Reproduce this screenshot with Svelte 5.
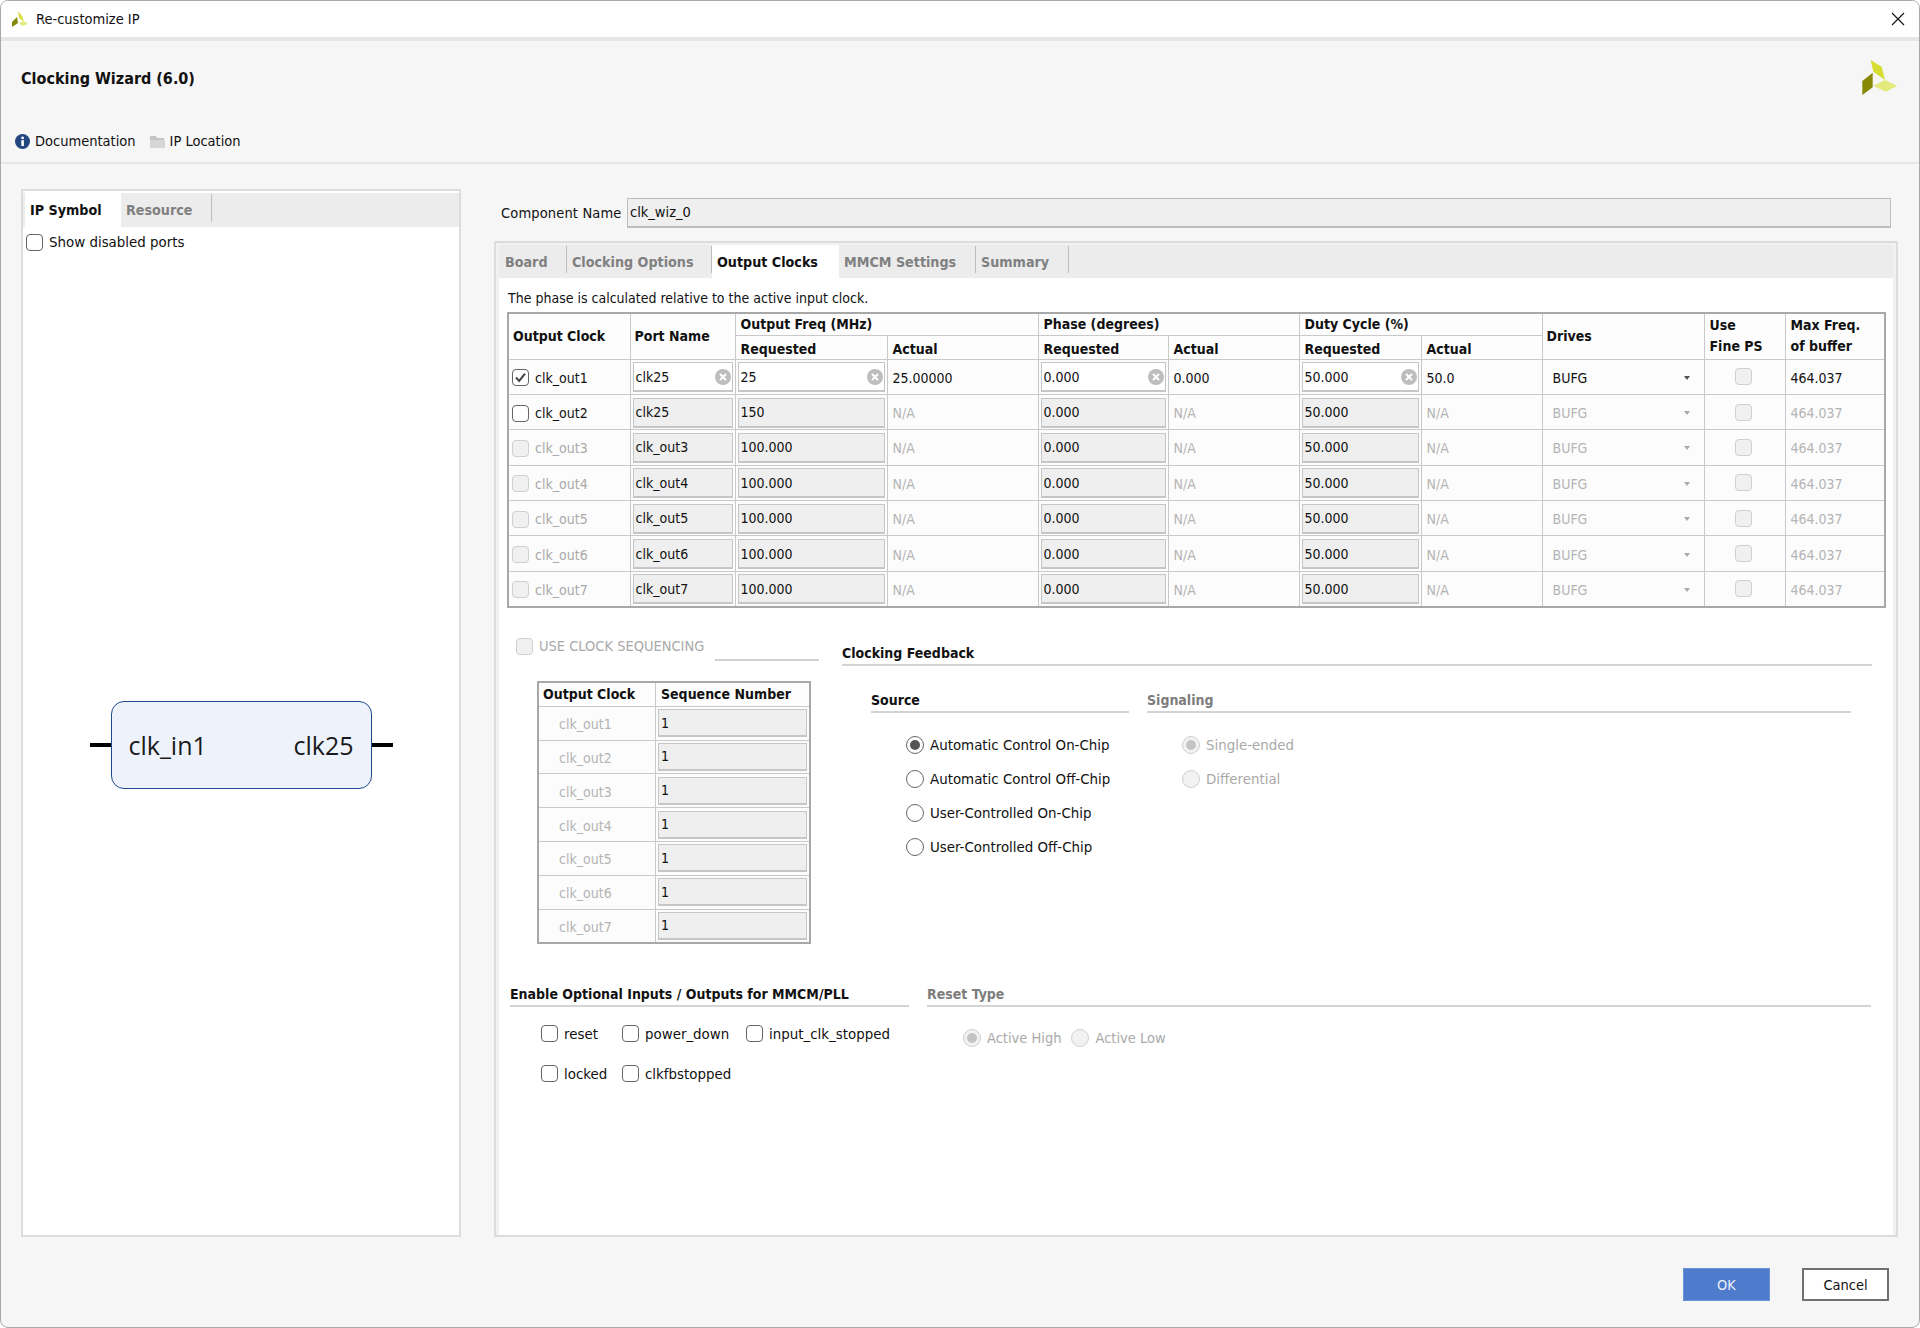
<script>
  const rows = [
    { name: "clk_out1", port: "clk25", freq: "25", actual: "25.00000", phase: "0.000", phaseAct: "0.000", duty: "50.000", dutyAct: "50.0", state: "on" },
    { name: "clk_out2", port: "clk25", freq: "150", actual: "N/A", phase: "0.000", phaseAct: "N/A", duty: "50.000", dutyAct: "N/A", state: "off" },
    { name: "clk_out3", port: "clk_out3", freq: "100.000", actual: "N/A", phase: "0.000", phaseAct: "N/A", duty: "50.000", dutyAct: "N/A", state: "dis" },
    { name: "clk_out4", port: "clk_out4", freq: "100.000", actual: "N/A", phase: "0.000", phaseAct: "N/A", duty: "50.000", dutyAct: "N/A", state: "dis" },
    { name: "clk_out5", port: "clk_out5", freq: "100.000", actual: "N/A", phase: "0.000", phaseAct: "N/A", duty: "50.000", dutyAct: "N/A", state: "dis" },
    { name: "clk_out6", port: "clk_out6", freq: "100.000", actual: "N/A", phase: "0.000", phaseAct: "N/A", duty: "50.000", dutyAct: "N/A", state: "dis" },
    { name: "clk_out7", port: "clk_out7", freq: "100.000", actual: "N/A", phase: "0.000", phaseAct: "N/A", duty: "50.000", dutyAct: "N/A", state: "dis" }
  ];
  const widths = [122, 105, 152, 151, 130, 131, 122, 121, 162, 81, 100];
  const sources = ["Automatic Control On-Chip", "Automatic Control Off-Chip", "User-Controlled On-Chip", "User-Controlled Off-Chip"];
</script>

{#snippet field(value, live)}
  <div class="field" class:live>
    <span>{value}</span>
    {#if live}
      <svg class="clear" width="16" height="16" viewBox="0 0 16 16">
        <circle cx="8" cy="8" r="8" fill="#bdbdbd" />
        <path d="M5 5l6 6M11 5l-6 6" stroke="#fff" stroke-width="2" />
      </svg>
    {/if}
  </div>
{/snippet}

{#snippet check(label, state = "off")}
  <div class="check" class:dim={state === "dis"}>
    <span class="box" class:dis={state === "dis"}>
      {#if state === "on"}
        <svg width="15" height="15" viewBox="0 0 15 15"><path d="M3 7.5l3.2 3.4L12 3.6" fill="none" stroke="#444" stroke-width="2" /></svg>
      {/if}
    </span>
    <span>{label}</span>
  </div>
{/snippet}

{#snippet radio(label, on, dis)}
  <div class="radio" class:dim={dis}>
    <span class="dot" class:on class:dis></span>
    <span>{label}</span>
  </div>
{/snippet}

<div class="window">
  <header class="titlebar">
    <svg class="app-icon" width="16" height="16" viewBox="0 0 16 16">
      <path d="M6 0l4 5 2 6-5-4z" fill="#d6dc38" />
      <path d="M7 12l5-2 4 3-6 2z" fill="#e6ea80" />
      <path d="M5 6l1 6-6 4v-5z" fill="#86880a" />
    </svg>
    <span class="title">Re-customize IP</span>
    <svg class="close" width="14" height="14" viewBox="0 0 14 14"><path d="M1 1l12 12M13 1L1 13" stroke="#111" stroke-width="1.1" /></svg>
  </header>

  <div class="heading">
    <h1>Clocking Wizard (6.0)</h1>
    <svg width="36" height="36" viewBox="0 0 36 36">
      <polygon points="8.7,0 19.7,6.7 23,20 11.3,11.7" fill="#d5dd33" />
      <polygon points="11.3,25.7 23,20 35.3,26 23.7,31.7" fill="#e4e97c" />
      <polygon points="10.7,12.7 10.7,27.3 0.3,35 0.3,21" fill="#868806" />
    </svg>
  </div>

  <nav class="links">
    <span class="link">
      <svg width="15" height="15" viewBox="0 0 15 15">
        <circle cx="7.5" cy="7.5" r="7.5" fill="#22467f" />
        <rect x="6.3" y="6.2" width="2.6" height="5.8" fill="#fff" />
        <circle cx="7.6" cy="3.9" r="1.4" fill="#fff" />
      </svg>
      Documentation
    </span>
    <span class="link">
      <svg width="15" height="13" viewBox="0 0 15 13">
        <path d="M0 1h6l1 2h7v2H0z" fill="#c4c4c4" />
        <path d="M0 5h15v8H0z" fill="#d6d6d6" />
      </svg>
      IP Location
    </span>
  </nav>

  <main class="body">
    <section class="panel symbol-panel">
      <div class="tabs">
        <span class="tab active">IP Symbol</span>
        <span class="tab sep">Resource</span>
      </div>
      <div class="show-ports">{@render check("Show disabled ports")}</div>
      <div class="symbol">
        <span class="pin"></span>
        <div class="block"><span>clk_in1</span><span>clk25</span></div>
        <span class="pin"></span>
      </div>
    </section>

    <section class="config">
      <div class="component">
        <label for="cname">Component Name</label>
        <input id="cname" value="clk_wiz_0" readonly />
      </div>

      <div class="panel main-panel">
        <div class="tabs">
          <span class="tab sep board">Board</span>
          <span class="tab sep options">Clocking Options</span>
          <span class="tab active outclk">Output Clocks</span>
          <span class="tab sep mmcm">MMCM Settings</span>
          <span class="tab sep summary">Summary</span>
        </div>

        <div class="page">
          <p class="note">The phase is calculated relative to the active input clock.</p>

          <table class="clocks">
            <colgroup>
              {#each widths as w}<col style="width: {w}px" />{/each}
            </colgroup>
            <thead>
              <tr class="h1">
                <th rowspan="2" class="mid">Output Clock</th>
                <th rowspan="2" class="mid">Port Name</th>
                <th colspan="2">Output Freq (MHz)</th>
                <th colspan="2">Phase (degrees)</th>
                <th colspan="2">Duty Cycle (%)</th>
                <th rowspan="2" class="mid">Drives</th>
                <th rowspan="2" class="two">Use<br />Fine PS</th>
                <th rowspan="2" class="two">Max Freq.<br />of buffer</th>
              </tr>
              <tr class="h2">
                <th>Requested</th><th>Actual</th>
                <th>Requested</th><th>Actual</th>
                <th>Requested</th><th>Actual</th>
              </tr>
            </thead>
            <tbody>
              {#each rows as r}
                {@const first = r.state === "on"}
                <tr>
                  <td class="clk">{@render check(r.name, r.state)}</td>
                  <td class="inp">{@render field(r.port, first)}</td>
                  <td class="inp">{@render field(r.freq, first)}</td>
                  <td class:na={!first}>{r.actual}</td>
                  <td class="inp">{@render field(r.phase, first)}</td>
                  <td class:na={!first}>{r.phaseAct}</td>
                  <td class="inp">{@render field(r.duty, first)}</td>
                  <td class:na={!first}>{r.dutyAct}</td>
                  <td class="drive" class:na={!first}><div><span>BUFG</span><i class="caret"></i></div></td>
                  <td class="fine"><span class="box dis"></span></td>
                  <td class:na={!first}>464.037</td>
                </tr>
              {/each}
            </tbody>
          </table>

          <div class="lower">
            <div class="seq">
              <div class="seq-head">
                {@render check("USE CLOCK SEQUENCING", "dis")}
                <span class="seq-line"></span>
              </div>
              <table class="seq-table">
                <thead><tr><th>Output Clock</th><th>Sequence Number</th></tr></thead>
                <tbody>
                  {#each rows as r}
                    <tr><td class="seq-name">{r.name}</td><td class="inp">{@render field("1", false)}</td></tr>
                  {/each}
                </tbody>
              </table>
            </div>

            <div class="feedback">
              <h3 class="rule">Clocking Feedback</h3>
              <div class="fb-cols">
                <div class="source">
                  <h3 class="rule">Source</h3>
                  <div class="radios">
                    {#each sources as s, i}
                      {@render radio(s, i === 0, false)}
                    {/each}
                  </div>
                </div>
                <div class="signaling">
                  <h3 class="rule off">Signaling</h3>
                  <div class="radios">
                    {@render radio("Single-ended", true, true)}
                    {@render radio("Differential", false, true)}
                  </div>
                </div>
              </div>
            </div>
          </div>

          <div class="optional">
            <div class="opt-io">
              <h3 class="rule">Enable Optional Inputs / Outputs for MMCM/PLL</h3>
              <div class="opt-grid">
                {@render check("reset")}
                {@render check("power_down")}
                {@render check("input_clk_stopped")}
                {@render check("locked")}
                {@render check("clkfbstopped")}
              </div>
            </div>
            <div class="reset-type">
              <h3 class="rule off">Reset Type</h3>
              <div class="reset-radios">
                {@render radio("Active High", true, true)}
                {@render radio("Active Low", false, true)}
              </div>
            </div>
          </div>
        </div>
      </div>
    </section>
  </main>

  <footer class="actions">
    <button class="ok">OK</button>
    <button class="cancel">Cancel</button>
  </footer>
</div>

<style>
  :global(body) {
    margin: 0;
    background: #fff;
  }

  .window {
    width: 1920px;
    height: 1328px;
    box-sizing: border-box;
    display: flex;
    flex-direction: column;
    border: 1px solid #a9a9a9;
    border-radius: 8px;
    overflow: hidden;
    background: #f6f6f6;
    font-family: "DejaVu Sans", "Noto Sans", sans-serif;
    font-stretch: condensed;
    font-size: 14.5px;
    color: #111;
  }

  .titlebar {
    height: 36px;
    flex: none;
    display: flex;
    align-items: center;
    padding: 0 14px 0 11px;
    background: #fff;
    border-bottom: 4px solid #e6e6e6;
  }

  .title {
    margin-left: 8px;
    flex: 1;
  }

  .heading {
    height: 74px;
    flex: none;
    display: flex;
    align-items: center;
    justify-content: space-between;
    padding: 0 21px 0 20px;
  }

  h1 {
    margin: 0;
    font-size: 16px;
    font-weight: bold;
  }

  .links {
    height: 49px;
    flex: none;
    box-sizing: border-box;
    display: flex;
    gap: 14px;
    padding: 16px 0 0 14px;
    border-bottom: 2px solid #e6e6e6;
  }

  .link {
    display: flex;
    align-items: center;
    gap: 5px;
    height: 20px;
  }

  .body {
    display: flex;
    padding: 25px 21px 0 20px;
    gap: 33px;
    height: 1074px;
    flex: none;
    box-sizing: border-box;
  }

  .panel {
    box-sizing: border-box;
    border: 2px solid #dcdcdc;
    padding: 2px 2px 0;
    background: #f1f1f1;
    display: flex;
    flex-direction: column;
  }

  .symbol-panel {
    width: 441px;
    height: 1048px;
    background: #fff;
    padding: 2px 0 0;
  }

  .tabs {
    display: flex;
    height: 34px;
    flex: none;
    background: #ececec;
    font-weight: bold;
    font-size: 14.2px;
    color: #808080;
  }

  .tab {
    display: flex;
    align-items: center;
    box-sizing: border-box;
    padding: 0 5px;
    height: 34px;
  }

  .tab.active {
    background: #fff;
    color: #111;
  }

  .tab.sep {
    position: relative;
  }

  .tab.sep::after {
    content: "";
    position: absolute;
    right: 0;
    top: 1px;
    bottom: 5px;
    width: 1px;
    background: #bdbdbd;
  }

  .symbol-panel .tab.active {
    width: 96px;
    margin-left: 2px;
  }

  .symbol-panel .tab.sep {
    width: 91px;
  }

  .show-ports {
    padding: 6px 0 0 3px;
    font-size: 14.9px;
  }

  .symbol {
    display: flex;
    align-items: center;
    justify-content: center;
    margin-top: 450px;
  }

  .pin {
    width: 21px;
    height: 4px;
    background: #000;
  }

  .block {
    box-sizing: border-box;
    width: 261px;
    height: 88px;
    padding: 0 17px;
    display: flex;
    align-items: center;
    justify-content: space-between;
    border: 1px solid #1f4a8c;
    border-radius: 13px;
    background: #eef3fb;
    font-family: "Open Sans", sans-serif;
    font-size: 25px;
    font-stretch: normal;
    color: #1a1a1a;
  }

  .config {
    width: 1404px;
    flex: none;
    display: flex;
    flex-direction: column;
  }

  .component {
    display: flex;
    align-items: center;
    padding: 5px 7px 0 7px;
    height: 37px;
    flex: none;
  }

  .component label {
    flex: none;
    width: 126px;
    letter-spacing: 0.15px;
  }

  .component input {
    flex: 1;
    height: 30px;
    box-sizing: border-box;
    border: 1px solid #bdbdbd;
    border-bottom-width: 2px;
    background: #efefef;
    padding: 0 2px;
    font: inherit;
    color: #111;
    outline: none;
  }

  .main-panel {
    margin-top: 10px;
    height: 996px;
    background: #f1f1f1;
    padding: 2px 3px 0;
  }

  .main-panel .tabs {
    height: 33px;
  }

  .main-panel .tab {
    height: 33px;
  }

  .board { width: 68px; padding-left: 6px; }
  .options { width: 145px; }
  .outclk { width: 127px; }
  .mmcm { width: 137px; }
  .summary { width: 93px; }

  .page {
    flex: 1;
    background: #fff;
    padding: 0 8px;
  }

  .note {
    margin: 0 0 0 1px;
    padding-top: 10px;
    height: 24px;
    line-height: 20px;
    font-size: 14px;
  }

  .clocks {
    border-collapse: collapse;
    table-layout: fixed;
    width: 1377px;
    border: 2px solid #a8a8a8;
    background: #fcfcfc;
    font-size: 14px;
  }

  th {
    font-weight: bold;
    font-size: 14px;
    text-align: left;
    padding: 0 4px 0 5px;
    border: 1px solid #c9c9c9;
    background: #fdfdfd;
    color: #111;
  }

  th.mid {
    padding-left: 4px;
  }

  .h1 { height: 22px; }
  .h2 { height: 24px; }
  .h2 th { padding-top: 3px; }
  th.two { line-height: 21px; }

  td {
    padding: 2px 4px 0 5px;
    border: 1px solid #c9c9c9;
    white-space: nowrap;
  }

  .clocks tbody tr {
    height: 35.4px;
  }

  td.inp {
    padding: 2px 2px 1px;
  }

  td.na,
  .seq-name {
    color: #b4b4b4;
  }

  .field {
    height: 30px;
    box-sizing: border-box;
    display: flex;
    align-items: center;
    justify-content: space-between;
    padding: 0 0 0 2px;
    border: 1px solid #c6c6c6;
    border-bottom-width: 2px;
    background: #efefef;
  }

  .field.live {
    background: #fff;
  }

  .clear {
    margin-right: 1px;
    flex: none;
  }

  .check,
  .radio {
    display: flex;
    align-items: center;
    gap: 6px;
    white-space: nowrap;
  }

  .dim {
    color: #a9a9a9;
  }

  .box {
    width: 17px;
    height: 17px;
    flex: none;
    box-sizing: border-box;
    display: flex;
    align-items: center;
    justify-content: center;
    border: 1.5px solid #666;
    border-radius: 4px;
    background: #fff;
  }

  .box.dis {
    border-color: #cfcfcf;
    background: #f0f0f0;
  }

  .dot {
    width: 18px;
    height: 18px;
    flex: none;
    box-sizing: border-box;
    display: flex;
    align-items: center;
    justify-content: center;
    border: 1.5px solid #666;
    border-radius: 50%;
    background: #fff;
  }

  .dot.dis {
    border-color: #cfcfcf;
    background: #f2f2f2;
  }

  .dot.on::after {
    content: "";
    width: 10px;
    height: 10px;
    border-radius: 50%;
    background: #555;
  }

  .dot.dis.on::after {
    background: #c4c4c4;
  }

  td.clk {
    padding-left: 3px;
  }

  .drive div {
    display: flex;
    align-items: center;
    justify-content: space-between;
    padding: 0 10px 0 5px;
  }

  .caret {
    width: 0;
    height: 0;
    border: 3px solid transparent;
    border-top: 4px solid #555;
    border-bottom: 0;
  }

  .drive.na .caret {
    border-top-color: #aaa;
  }

  td.fine {
    padding: 0 2px 0 0;
  }

  .fine .box {
    margin: 0 auto;
  }

  .clocks td:last-child,
  .clocks th:last-child {
    padding-left: 5px;
  }

  .lower {
    display: flex;
    margin-top: 29px;
    height: 319px;
  }

  .seq {
    width: 335px;
    flex: none;
    padding-top: 1px;
    box-sizing: border-box;
  }

  .seq-head {
    display: flex;
    align-items: flex-start;
    padding-left: 9px;
    height: 43px;
    position: relative;
  }

  .seq-line {
    position: absolute;
    left: 208px;
    top: 21px;
    width: 104px;
    height: 2px;
    background: #cfcfcf;
  }

  .seq-table {
    border-collapse: collapse;
    table-layout: fixed;
    width: 274px;
    margin-left: 30px;
    border: 2px solid #a8a8a8;
    background: #fcfcfc;
    font-size: 14px;
  }

  .seq-table th {
    height: 23px;
  }

  .seq-table th:first-child {
    width: 108px;
    padding-left: 4px;
  }

  .seq-table tbody tr {
    height: 33.8px;
  }

  .seq-table .field {
    height: 28px;
  }

  .seq-table td.inp {
    padding: 2px;
  }

  td.seq-name {
    padding-left: 20px;
  }

  h3 {
    margin: 0;
    font-size: 14px;
    font-weight: bold;
  }

  h3.off {
    color: #7d7d7d;
  }

  .rule {
    border-bottom: 2px solid #d4d4d4;
    height: 21px;
    line-height: 21px;
  }

  .feedback {
    width: 1030px;
    flex: none;
    padding-top: 6px;
  }

  .fb-cols {
    display: flex;
    padding-left: 29px;
    margin-top: 24px;
    gap: 18px;
  }

  .source {
    width: 258px;
  }

  .signaling {
    width: 704px;
  }

  .radios {
    display: flex;
    flex-direction: column;
    gap: 16px;
    margin-top: 23px;
    padding-left: 35px;
    font-size: 14.9px;
  }

  .radios .radio {
    height: 18px;
  }

  .optional {
    display: flex;
    margin-top: 28px;
    padding-left: 3px;
    gap: 18px;
  }

  .opt-io {
    width: 399px;
    flex: none;
  }

  .reset-type {
    width: 944px;
    flex: none;
  }

  .opt-grid {
    display: grid;
    grid-template-columns: 81px 124px auto;
    row-gap: 22px;
    padding: 18px 0 0 31px;
    font-size: 14.9px;
  }

  .reset-radios {
    display: flex;
    gap: 10px;
    padding: 22px 0 0 36px;
  }

  .actions {
    flex: 1;
    display: flex;
    justify-content: flex-end;
    gap: 32px;
    padding: 30px 30px 0 0;
  }

  button {
    width: 87px;
    height: 33px;
    font: inherit;
    padding: 0;
  }

  .ok {
    background: #4e7bcb;
    border: 1px solid #6b91d6;
    color: #eaf0fa;
  }

  .cancel {
    background: #fff;
    border: 2px solid #707070;
    color: #111;
  }
</style>
